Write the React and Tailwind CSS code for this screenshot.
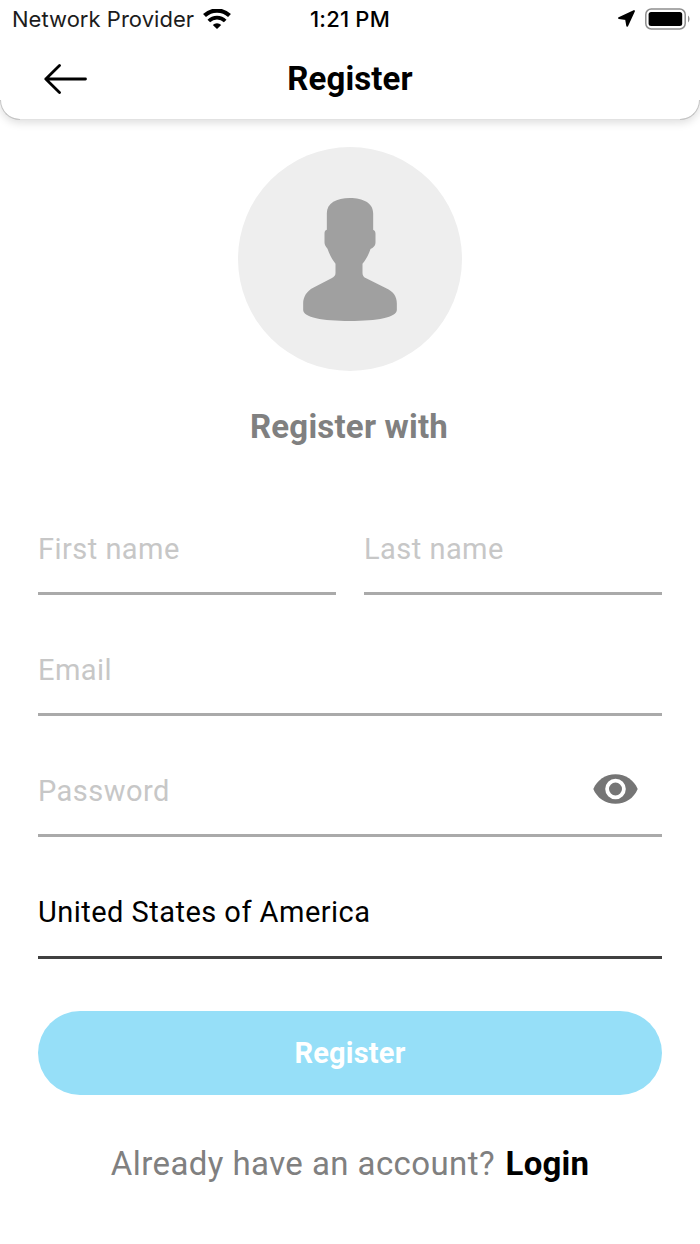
import { useState } from 'react'

function WifiIcon() {
  return (
    <svg width="28" height="20" viewBox="0 0 28 20" fill="none">
      <path d="M1.5 6.6 A18 18 0 0 1 26.5 6.6" stroke="#000" strokeWidth="4.2" />
      <path d="M5.8 12 A11.8 11.8 0 0 1 22.2 12" stroke="#000" strokeWidth="3.8" />
      <path d="M14 20 L9.8 16 A6 6 0 0 1 18.2 16 Z" fill="#000" />
    </svg>
  )
}

function StatusBar() {
  return (
    <div className="h-[39px] grid grid-cols-3 items-center font-['Inter'] text-[22px] text-black whitespace-nowrap">
      <div className="flex items-center pl-[12px]">
        <span className="text-[#1c1c1c] tracking-[0.03px]">Network Provider</span>
        <span className="ml-[9px] pb-[2px]"><WifiIcon /></span>
      </div>
      <div className="text-center font-medium tracking-[0.2px]">1:21 PM</div>
      <div className="flex items-center justify-end pr-[10px] pb-[2px] gap-[10px]">
        <svg width="17" height="17" viewBox="0 0 17 17">
          <path d="M16 1 L1 8 L8 9 L9.2 15.8 Z" fill="#000" stroke="#000" strokeWidth="1.8" strokeLinejoin="round" />
        </svg>
        <svg width="45" height="22" viewBox="0 0 45 22">
          <rect x="0.8" y="1" width="39.4" height="20" rx="5.5" fill="none" stroke="#8e8e8e" strokeWidth="1.5" />
          <rect x="3.6" y="4" width="33.6" height="14" rx="2.5" fill="#000" />
          <path d="M43 7.6 C45 9 45 13 43 14.4 Z" fill="#8e8e8e" />
        </svg>
      </div>
    </div>
  )
}

function Header() {
  return (
    <header className="relative h-[120px] rounded-b-[20px] bg-white border-b border-[#e2e2e2] shadow-[0_3px_8px_rgba(0,0,0,0.13)]">
      <StatusBar />
      <div className="grid grid-cols-[100px_1fr_100px] items-center h-[79px]">
        <button className="pl-[44px]">
          <svg width="43" height="30" viewBox="0 0 43 30" fill="none" stroke="#000" strokeWidth="2.8" strokeLinecap="round" strokeLinejoin="round">
            <path d="M15.5 1.5 L1.8 15 L15.5 28.5 M1.8 15 H41.5" />
          </svg>
        </button>
        <h1 className="text-center text-[33px] tracking-[0.1px] font-bold text-black">Register</h1>
      </div>
      {/* Corner outlines */}
      <span className="absolute left-0 -bottom-px size-[20px] rounded-bl-[20px] border-l border-b border-[#c4c4c4]" />
      <span className="absolute right-0 -bottom-px size-[20px] rounded-br-[20px] border-r border-b border-[#c4c4c4]" />
    </header>
  )
}

function Avatar() {
  return (
    <div className="size-[224px] rounded-full bg-[#eeeeee] flex justify-center pt-[51px]">
      <svg width="94" height="123" viewBox="250 173 281 369">
        <path
          fill="#a0a0a0"
          d="M321 268 V219 C321 188 350 173 390 173 C430 173 460 188 460 219 V268 C465 270 467 274 467 280 V306 C467 317 460 323 452 326 C447 342 439 357 428 370 V398 C428 406 432 411 439 414 L499 444 C520 453 531 469 531 489 V509 C531 531 472 542 390 542 C308 542 250 531 250 509 V489 C250 469 261 452 280 442 L335 414 C343 410 347 405 347 398 V370 C336 356 329 343 323 325 C317 319 314 313 314 306 V280 C314 273 316 269 321 268 Z"
        />
      </svg>
    </div>
  )
}

function Field({ type = 'text', placeholder, value, onChange, dark, children }) {
  return (
    <label className={`flex items-center border-b-[3px] ${dark ? 'h-[95px] border-[#404040]' : 'h-[94px] border-[#aaaaaa]'}`}>
      <input
        type={type}
        placeholder={placeholder}
        value={value}
        onChange={(e) => onChange(e.target.value)}
        className="w-full min-w-0 pt-[6px] text-[29px] tracking-[0.47px] text-black placeholder:text-[#c7c7c7] outline-none"
      />
      {children}
    </label>
  )
}

export default function App() {
  const [form, setForm] = useState({
    firstName: '',
    lastName: '',
    email: '',
    password: '',
    country: 'United States of America',
  })
  const [showPassword, setShowPassword] = useState(false)

  const set = (key) => (value) => setForm({ ...form, [key]: value })

  return (
    <div className="w-[700px] h-[1244px] overflow-hidden bg-white font-['Roboto',sans-serif]">
      <Header />

      <main className="px-[38px] pt-[27px]">
        <div className="flex flex-col items-center">
          <Avatar />
          <h2 className="mt-[36px] mr-[2px] text-[33px] leading-[40px] tracking-[0.2px] font-bold text-[#808080]">Register with</h2>
        </div>

        <form className="mt-[54px]" onSubmit={(e) => e.preventDefault()}>
          <div className="grid grid-cols-2 gap-[28px]">
            <Field placeholder="First name" value={form.firstName} onChange={set('firstName')} />
            <Field placeholder="Last name" value={form.lastName} onChange={set('lastName')} />
          </div>
          <div className="mt-[27px] flex flex-col gap-[27px]">
            <Field placeholder="Email" value={form.email} onChange={set('email')} />
            <Field
              type={showPassword ? 'text' : 'password'}
              placeholder="Password"
              value={form.password}
              onChange={set('password')}
            >
              <button type="button" className="mr-[24px] shrink-0" onClick={() => setShowPassword(!showPassword)}>
                <svg width="45" height="30" viewBox="0 0 45 30">
                  <path d="M0.3 15 C4 6 12.5 0.2 22.5 0.2 S41 6 44.7 15 C41 24 32.5 29.8 22.5 29.8 S4 24 0.3 15 Z" fill="#757575" />
                  <circle cx="22.5" cy="15" r="8.4" fill="#757575" stroke="#fff" strokeWidth="3.8" />
                </svg>
              </button>
            </Field>
            <Field value={form.country} onChange={set('country')} dark />
          </div>

          <button className="mt-[52px] w-full h-[84px] pt-[1px] rounded-full bg-[#96dff8] text-white text-[29px] tracking-[0.2px] font-bold">
            Register
          </button>
        </form>

        <p className="mt-[49px] text-center text-[33px] leading-[40px] tracking-[0.42px] text-[#808080] whitespace-nowrap">
          Already have an account? <a href="#" className="ml-[2px] tracking-[0.2px] font-bold text-black">Login</a>
        </p>
      </main>
    </div>
  )
}
